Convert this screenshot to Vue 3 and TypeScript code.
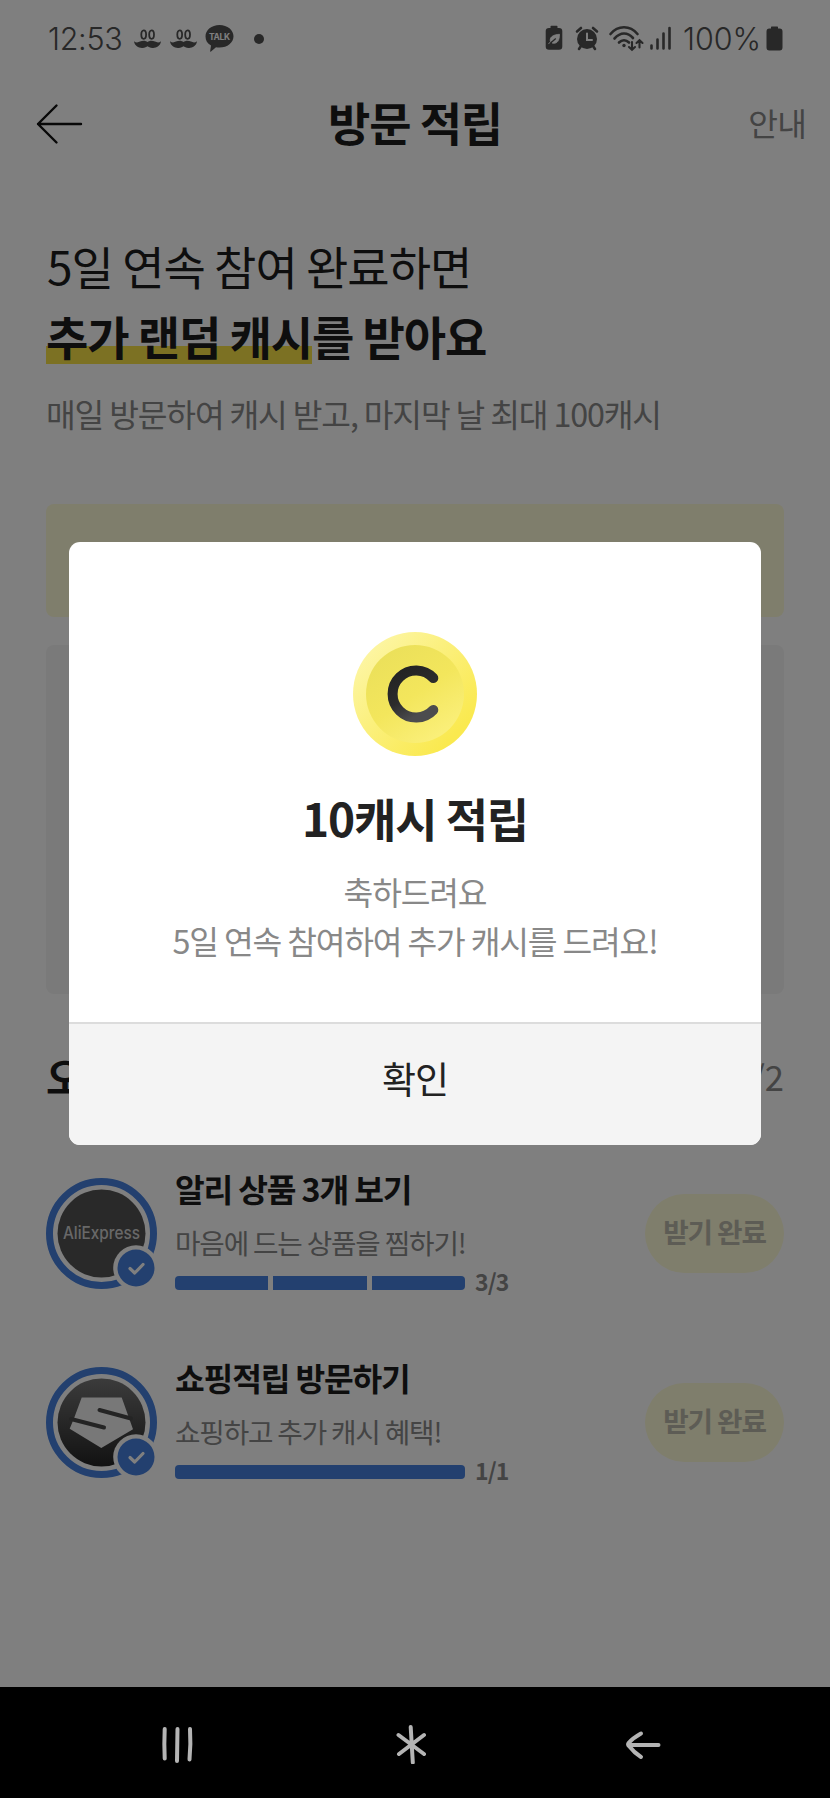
<script setup lang="ts">
interface Mission {
  id: string
  title: string
  desc: string
  done: number
  total: number
}

const missions: Mission[] = [
  { id: 'ali', title: '알리 상품 3개 보기', desc: '마음에 드는 상품을 찜하기!', done: 3, total: 3 },
  { id: 'shop', title: '쇼핑적립 방문하기', desc: '쇼핑하고 추가 캐시 혜택!', done: 1, total: 1 },
]
</script>

<template>
  <div class="phone">
    <main class="screen">
      <div class="status">
        <span class="clock">12:53</span>
        <svg v-for="n in 2" :key="n" class="mustache" viewBox="0 0 27 20" width="27" height="20">
          <ellipse cx="9.7" cy="5.6" rx="2.4" ry="4.3" />
          <ellipse cx="17.6" cy="5.6" rx="2.4" ry="4.3" />
          <path d="M0 12.2C2 14 4 13.6 6 12.6C9 11 12 11.6 13.5 13C15 11.6 18 11 21 12.6C23 13.6 25 14 27 12.2C26.500 17 22 19.200 18.500 18.900C16 18.800 14.500 18 13.500 17.200C12.500 18 11 18.800 8.500 18.900C5 19.200 .5 17 0 12.200Z" />
        </svg>
        <svg class="talk" viewBox="0 0 29 27" width="29" height="27">
          <path d="M14.500 0C22.500 0 28.500 5 28.500 11.300S22.500 22.600 14.500 22.600C13 22.600 12 22.500 11 22.300L6 26.500C5.300 27 5 26.600 5.200 26L6 20.600C2.300 18.700.5 15.400.5 11.300C.5 5 6.500 0 14.500 0Z" />
          <text x="14.600" y="15.400" text-anchor="middle" textLength="21">TALK</text>
        </svg>
        <span class="more" />
        <svg class="system" viewBox="0 0 130 28" width="130" height="28">
          <path class="fill" d="M5.500 3V1.500Q5.500.8 6.200.8H11.800Q12.500.8 12.500 1.500V3H14Q17.300 3 17.300 6V21.500Q17.300 24.800 14 24.800H4Q.7 24.800.7 21.500V6Q.7 3 4 3Z" />
          <path class="leaf" d="M3.600 18.800L5.500 16.800C4 12.500 8 9.500 14.500 9.300C14.500 15 12.500 19.500 7 18L11 13.800" />
          <path class="vein" d="M5.800 17.800L10.500 13.800" />
          <circle class="fill" cx="42" cy="14" r="10" />
          <path class="line" d="M32 6.500L36 3M52 6.500L48 3M36 21L34 24M48 21L50 24" />
          <path class="cut" d="M42 8.500V15H47" />
          <path class="line" d="M65.500 9C73 0 85 0 92.500 9M69.500 13.500C75.500 7 82.500 7 88 13M74 17.500C77 14.500 81 14.500 84 17.500" />
          <path class="line thin" d="M87 17V24.500M84 22L87 24.800L90 22M94.500 22.500V15.500M91.500 18L94.500 15.200L97.500 18" />
          <circle class="fill" cx="79" cy="20.500" r="1.700" />
          <path class="line" d="M106.500 20.500V23.500M112.500 14.500V23.500M118.500 8.500V23.500M124.500 3V23.500" />
        </svg>
        <span class="percent">100%</span>
        <svg class="battery" viewBox="0 0 17 25" width="17" height="25">
          <path d="M5 2.500V1Q5 .4 5.700.4H11.300Q12 .4 12 1V2.500H13.700Q16.500 2.500 16.500 5.500V21.500Q16.500 24.500 13.700 24.500H3.300Q.5 24.500.5 21.500V5.500Q.5 2.500 3.300 2.500Z" />
        </svg>
      </div>

      <header class="header">
        <svg class="back" viewBox="0 0 48 42" width="48" height="42">
          <path d="M46 21H3M21.500 2.500L3 21L21.500 39.500" />
        </svg>
        <h1>방문 적립</h1>
        <span class="guide">안내</span>
      </header>

      <section class="intro">
        <p class="lead">5일 연속 참여 완료하면</p>
        <p class="lead strong"><mark>추가 랜덤 캐시</mark>를 받아요</p>
        <p class="note">매일 방문하여 캐시 받고, 마지막 날 최대 100캐시</p>
      </section>

      <div class="banner" />
      <div class="board" />

      <div class="section-head">
        <h2>오늘의 미션</h2>
        <span>2/2</span>
      </div>

      <ul class="missions">
        <li v-for="m in missions" :key="m.id" class="mission">
          <svg class="avatar" viewBox="0 0 112 112" width="112" height="112">
            <defs>
              <linearGradient id="shopFill" x1="0" y1="0" x2="0" y2="1">
                <stop offset="0" stop-color="#777" />
                <stop offset="1" stop-color="#242424" />
              </linearGradient>
            </defs>
            <circle class="ring" cx="55.500" cy="55.500" r="52" />
            <template v-if="m.id === 'ali'">
              <circle class="disc" cx="55.500" cy="55.500" r="44" />
              <text class="brand" x="55.500" y="61" text-anchor="middle" textLength="77" lengthAdjust="spacingAndGlyphs">AliExpress</text>
            </template>
            <template v-else>
              <circle cx="55.500" cy="55.500" r="44" fill="url(#shopFill)" />
              <path class="mark" d="M35.700 30.500H75.700L82.300 49L87 62.200L55.300 81L23.700 61.800L28.500 50Z" />
              <path class="slot" d="M53.500 43L85 51.500M25 52L58 60.500" />
            </template>
            <circle class="halo" cx="90" cy="90" r="22.800" />
            <circle class="badge" cx="90" cy="90" r="18.500" />
            <path class="tick" d="M84 90.500L88.700 95L97 86.500" />
          </svg>
          <div class="body">
            <h3>{{ m.title }}</h3>
            <p class="desc">{{ m.desc }}</p>
            <div class="progress">
              <div class="track">
                <i v-for="s in m.total" :key="s" />
              </div>
              <span>{{ m.done }}/{{ m.total }}</span>
            </div>
          </div>
          <span class="pill">받기 완료</span>
        </li>
      </ul>

      <div class="dim">
        <div class="dialog">
          <div class="content">
            <svg class="coin" viewBox="0 0 124 124" width="124" height="124">
              <defs>
                <linearGradient id="rim" x1="0.100" y1="0.100" x2="0.850" y2="0.800">
                  <stop offset="0" stop-color="#fdf6a6" />
                  <stop offset="0.450" stop-color="#fbf07e" />
                  <stop offset="1" stop-color="#fae94f" />
                </linearGradient>
                <linearGradient id="face" x1="0.200" y1="0.050" x2="0.800" y2="0.950">
                  <stop offset="0" stop-color="#ebe05a" />
                  <stop offset="0.500" stop-color="#f3e65c" />
                  <stop offset="1" stop-color="#fbf07c" />
                </linearGradient>
                <linearGradient id="letter" x1="0" y1="0" x2="0.500" y2="1">
                  <stop offset="0" stop-color="#222" />
                  <stop offset="0.600" stop-color="#2c2c2c" />
                  <stop offset="1" stop-color="#4c4c4e" />
                </linearGradient>
              </defs>
              <circle cx="62" cy="62" r="62" fill="url(#rim)" />
              <circle cx="62" cy="62" r="49" fill="url(#face)" />
              <path class="cee" d="M80.300 46A23.500 23.500 0 1 0 80.300 78" />
            </svg>
            <h2>10캐시 적립</h2>
            <p>축하드려요<br>5일 연속 참여하여 추가 캐시를 드려요!</p>
          </div>
          <button type="button">확인</button>
        </div>
      </div>
    </main>

    <nav class="navbar">
      <svg viewBox="0 0 34 40" width="34" height="40"><path d="M4.700 5Q4 20 4.700 34.500M17.500 5L17 37M30 5Q31 20 29.500 35.500" /></svg>
      <svg class="home" viewBox="0 0 34 40" width="34" height="40"><path d="M16.700 3L18.800 38.500M4.500 11L30 30M30 11L5 30" /></svg>
      <svg viewBox="0 0 38 40" width="38" height="40"><path d="M34.500 21H4.500M17 9.500Q9 14 4.500 19Q3.500 20.500 5 22Q10 28.500 17 33" /></svg>
    </nav>
  </div>
</template>

<style>
body {
  margin: 0;
}
</style>

<style scoped>
.phone {
  width: 830px;
  height: 1798px;
  display: flex;
  flex-direction: column;
  overflow: hidden;
  background: #000;
  font-family: "Noto Sans CJK KR", "Noto Sans", sans-serif;
  font-weight: 400;
  color: #1d1d1d;
}

h1,
h2,
h3,
p,
ul {
  margin: 0;
  padding: 0;
  list-style: none;
}

.screen {
  position: relative;
  flex: none;
  height: 1687px;
  box-sizing: border-box;
  padding: 0 46px;
  background: #fff;
}

.status {
  display: flex;
  align-items: center;
  height: 77px;
  margin: 0 -46px;
  padding: 0 46px 0 48px;
  color: #505050;
  font-family: Inter, Roboto, sans-serif;
  font-size: 30.500px;
  font-weight: 350;
}

.status svg {
  flex: none;
  fill: #505050;
}

.clock {
  width: 76px;
  letter-spacing: -0.300px;
}

.mustache {
  margin: 0 0 0 10px;
}

.mustache + .mustache {
  margin-left: 9px;
}

.mustache ellipse {
  fill: none;
  stroke: #505050;
  stroke-width: 1.800;
}

.talk {
  margin-left: 8px;
}

.talk text {
  font: 700 8.500px Inter, sans-serif;
  fill: #fff;
}

.more {
  width: 10px;
  height: 10px;
  margin-left: 20px;
  border-radius: 50%;
  background: #505050;
}

.system {
  margin-left: auto;
}

.line,
.leaf,
.vein,
.cut {
  fill: none;
  stroke: #505050;
  stroke-width: 2.600;
  stroke-linecap: round;
}

.thin {
  stroke-width: 2.100;
}

.leaf {
  fill: #fff;
  stroke: #fff;
  stroke-width: 0.800;
}

.vein {
  stroke-width: 1.200;
}

.cut {
  stroke: #fff;
  stroke-width: 2;
}

.percent {
  margin-left: 8px;
  width: 79px;
  letter-spacing: -0.100px;
}

.battery {
  margin: 0 1px 0 4px;
}

.header {
  display: grid;
  grid-template-columns: 1fr auto 1fr;
  align-items: center;
  height: 94px;
  margin: 0 -46px;
  padding: 0 35px;
}

.back,
.cee {
  fill: none;
  stroke: #111;
  stroke-width: 2.400;
  stroke-linecap: round;
  stroke-linejoin: round;
}

h1 {
  margin-top: -7px;
  font-size: 46px;
  line-height: 60px;
  letter-spacing: -1.150px;
}

.guide {
  justify-self: end;
  margin: -5px -11px 0 0;
  font-size: 32.300px;
  color: #888;
  letter-spacing: -0.900px;
}

.intro {
  height: 333px;
  padding-top: 61px;
  box-sizing: border-box;
}

.lead {
  height: 69px;
  font-size: 46px;
  line-height: 67px;
  letter-spacing: -1px;
  text-indent: 1px;
}

.strong {
  font-weight: 700;
  line-height: 69px;
  letter-spacing: -1.100px;
  text-indent: 0;
}

mark {
  color: inherit;
  background: linear-gradient(#f9e246, #f9e246) 0 44px / 100% 18px no-repeat;
}

.note {
  margin-top: 19px;
  font-size: 32.300px;
  line-height: 48px;
  color: #888;
  letter-spacing: -1.150px;
}

.banner {
  height: 113px;
  border-radius: 8px;
  background: #fffcd8;
}

.board {
  height: 349px;
  margin-top: 28px;
  border-radius: 8px;
  background: #f4f4f4;
}

.section-head {
  display: flex;
  align-items: center;
  justify-content: space-between;
  height: 60px;
  margin-top: 52px;
}

.section-head h2 {
  font-size: 41.500px;
  letter-spacing: -1.150px;
}

.section-head span {
  font-size: 34.600px;
  color: #888;
}

.missions {
  display: grid;
  gap: 77px;
  margin-top: 72px;
}

.mission {
  display: flex;
  height: 112px;
}

.avatar {
  flex: none;
}

.ring {
  fill: none;
  stroke: #4680de;
  stroke-width: 7;
}

.disc {
  fill: #525252;
}

.brand {
  font: 500 17px Inter, sans-serif;
  fill: #d0d0d0;
}

.mark {
  fill: #f0f0f0;
}

.slot {
  stroke: #484848;
  stroke-width: 4;
  stroke-linecap: round;
}

.halo {
  fill: #fff;
}

.badge {
  fill: #4680de;
}

.tick {
  fill: none;
  stroke: #fff;
  stroke-width: 3.200;
  stroke-linecap: round;
  stroke-linejoin: round;
}

.body {
  margin-left: 17px;
  flex: 1;
}

h3 {
  margin-top: -14px;
  font-size: 32.300px;
  line-height: 48px;
  letter-spacing: -1.150px;
}

.desc {
  margin-top: 10px;
  font-size: 27.700px;
  line-height: 40px;
  color: #888;
  letter-spacing: -1.150px;
}

.progress {
  display: flex;
  align-items: center;
  height: 14px;
  margin-top: 14px;
}

.track {
  display: flex;
  gap: 5px;
  width: 290px;
  height: 14px;
  border-radius: 4px;
  overflow: hidden;
}

.track i {
  flex: 1;
  background: #4680de;
}

.progress span {
  margin: -4px 0 0 10px;
  font-size: 23px;
  font-weight: 700;
  line-height: 14px;
  color: #888;
  letter-spacing: -0.900px;
}

.pill {
  width: 139px;
  height: 79px;
  margin-top: 16px;
  border-radius: 40px;
  background: #fffcd8;
  color: #bab9ab;
  font-size: 27.700px;
  font-weight: 700;
  line-height: 74px;
  letter-spacing: -1.150px;
  text-align: center;
}

.dim {
  position: absolute;
  inset: 0;
  background: rgba(0, 0, 0, 0.500);
  display: flex;
  justify-content: center;
  align-items: center;
}

.dialog {
  width: 692px;
  height: 603px;
  display: flex;
  flex-direction: column;
  border-radius: 11px;
  overflow: hidden;
  background: #fff;
  color: #222;
  text-align: center;
}

.content {
  flex: 1;
  padding-top: 90px;
}

.coin {
  display: block;
  margin: 0 auto;
}

.cee {
  stroke: url(#letter);
  stroke-width: 10;
}

.content h2 {
  margin-top: 27px;
  font-size: 46px;
  line-height: 69px;
  letter-spacing: -1.150px;
}

.content p {
  margin-top: 15px;
  font-size: 32.300px;
  line-height: 48.500px;
  color: #888;
  letter-spacing: -1.150px;
}

button {
  height: 123px;
  border: 0;
  border-top: 2px solid #dcdcdc;
  padding: 0 0 14px;
  background: #f4f4f4;
  color: #222;
  font: inherit;
  font-size: 37px;
  letter-spacing: -1px;
}

.navbar {
  display: flex;
  justify-content: space-between;
  box-sizing: border-box;
  height: 111px;
  padding: 37px 168px 0 160px;
}

.navbar svg {
  fill: none;
  stroke: #b4b4b4;
  stroke-width: 4;
  stroke-linecap: round;
  stroke-linejoin: round;
}

.navbar .home {
  margin-left: 4px;
}
</style>
